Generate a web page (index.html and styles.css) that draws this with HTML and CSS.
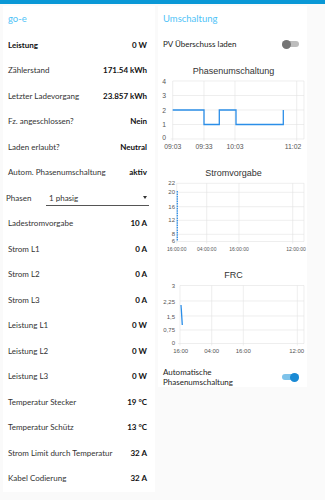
FILE: index.html
```html
<!DOCTYPE html>
<html lang="de">
<head>
  <meta charset="UTF-8">
  <title>go-e</title>
  <meta name="viewport" content="width=device-width, initial-scale=1.0">
  <link rel="stylesheet" href="styles.css">
</head>
<body>

  <div class="topbar"></div>

  <div class="main">
    <div class="card left">
      <div class="card-title">go-e</div>

      <div class="row strong"><span>Leistung</span><b>0 W</b></div>
      <div class="row"><span>Zählerstand</span><b>171.54 kWh</b></div>
      <div class="row"><span>Letzter Ladevorgang</span><b>23.857 kWh</b></div>
      <div class="row"><span>Fz. angeschlossen?</span><b>Nein</b></div>
      <div class="row"><span>Laden erlaubt?</span><b>Neutral</b></div>
      <div class="row"><span>Autom. Phasenumschaltung</span><b>aktiv</b></div>
      <div class="row select-row">
        <span class="select-label">Phasen</span>
        <div class="select">
          <span>1 phasig</span>
          <span class="caret"></span>
        </div>
      </div>
      <div class="row"><span>Ladestromvorgabe</span><b>10 A</b></div>
      <div class="row"><span>Strom L1</span><b>0 A</b></div>
      <div class="row"><span>Strom L2</span><b>0 A</b></div>
      <div class="row"><span>Strom L3</span><b>0 A</b></div>
      <div class="row"><span>Leistung L1</span><b>0 W</b></div>
      <div class="row"><span>Leistung L2</span><b>0 W</b></div>
      <div class="row"><span>Leistung L3</span><b>0 W</b></div>
      <div class="row"><span>Temperatur Stecker</span><b>19 °C</b></div>
      <div class="row"><span>Temperatur Schütz</span><b>13 °C</b></div>
      <div class="row"><span>Strom Limit durch Temperatur</span><b>32 A</b></div>
      <div class="row"><span>Kabel Codierung</span><b>32 A</b></div>
    </div>

    <div class="card right">
      <div class="card-title">Umschaltung</div>

      <div class="switch-row">
        <span>PV Überschuss laden</span>
        <div class="switch"><div class="track"></div><div class="thumb"></div></div>
      </div>

      <div class="chart first">
        <div class="chart-title">Phasenumschaltung</div>
        <svg class="plot big" viewBox="158 79 149 86" width="149" height="86">
          <g class="grid">
            <line x1="172.7" y1="81" x2="304" y2="81"/>
            <line x1="172.7" y1="95.5" x2="304" y2="95.5"/>
            <line x1="172.7" y1="110" x2="304" y2="110"/>
            <line x1="172.7" y1="124.5" x2="304" y2="124.5"/>
            <line x1="170.7" y1="139" x2="304" y2="139"/>
            <line x1="172.7" y1="81" x2="172.7" y2="141"/>
            <line x1="204" y1="81" x2="204" y2="141"/>
            <line x1="235" y1="81" x2="235" y2="141"/>
            <line x1="296.7" y1="81" x2="296.7" y2="141"/>
            <line x1="304" y1="81" x2="304" y2="139"/>
          </g>
          <g class="ylab">
            <text x="166" y="83.5">4</text>
            <text x="166" y="98">3</text>
            <text x="166" y="112.5">2</text>
            <text x="166" y="127">1</text>
            <text x="166" y="139.7">0</text>
          </g>
          <g class="xlab">
            <text x="172.7" y="148.6">09:03</text>
            <text x="204" y="148.6">09:33</text>
            <text x="235" y="148.6">10:03</text>
            <text x="293" y="148.6">11:02</text>
          </g>
          <path class="series" d="M172.7 110 H204 V124.5 H219.3 V110 H236 V124.5 H283.3 V110"/>
        </svg>
      </div>

      <div class="chart">
        <div class="chart-title">Stromvorgabe</div>
        <svg class="plot small" viewBox="158 181 149 86" width="149" height="86">
          <g class="grid">
            <line x1="176.7" y1="183.3" x2="304" y2="183.3"/>
            <line x1="176.7" y1="192.3" x2="304" y2="192.3"/>
            <line x1="176.7" y1="206.7" x2="304" y2="206.7"/>
            <line x1="176.7" y1="220.3" x2="304" y2="220.3"/>
            <line x1="176.7" y1="234.3" x2="304" y2="234.3"/>
            <line x1="176.7" y1="241.5" x2="304" y2="241.5"/>
            <line x1="176.7" y1="183.3" x2="176.7" y2="243.5"/>
            <line x1="206.7" y1="183.3" x2="206.7" y2="243.5"/>
            <line x1="239" y1="183.3" x2="239" y2="243.5"/>
            <line x1="292.7" y1="183.3" x2="292.7" y2="243.5"/>
            <line x1="304" y1="183.3" x2="304" y2="241.5"/>
          </g>
          <g class="ylab">
            <text x="175" y="184.7">22</text>
            <text x="175" y="193.7">20</text>
            <text x="175" y="208.7">16</text>
            <text x="175" y="222.2">12</text>
            <text x="175" y="236.3">8</text>
            <text x="175" y="242.8">6</text>
          </g>
          <g class="xlab">
            <text x="176.7" y="251.3">16:00:00</text>
            <text x="206.7" y="251.3">04:00:00</text>
            <text x="239" y="251.3">16:00:00</text>
            <text x="296" y="251.3">12:00:00</text>
          </g>
          <line class="series dashed" x1="177.3" y1="191" x2="177.3" y2="240.5"/>
        </svg>
      </div>

      <div class="chart">
        <div class="chart-title">FRC</div>
        <svg class="plot" viewBox="158 283 149 84" width="149" height="84">
          <g class="grid">
            <line x1="180" y1="285.5" x2="304" y2="285.5"/>
            <line x1="180" y1="301" x2="304" y2="301"/>
            <line x1="180" y1="316" x2="304" y2="316"/>
            <line x1="180" y1="330" x2="304" y2="330"/>
            <line x1="178" y1="343.5" x2="304" y2="343.5"/>
            <line x1="180" y1="285.5" x2="180" y2="345.5"/>
            <line x1="211.7" y1="285.5" x2="211.7" y2="345.5"/>
            <line x1="243.3" y1="285.5" x2="243.3" y2="345.5"/>
            <line x1="297.3" y1="285.5" x2="297.3" y2="345.5"/>
            <line x1="304" y1="285.5" x2="304" y2="343.5"/>
          </g>
          <g class="ylab">
            <text x="175" y="288">3</text>
            <text x="175" y="303.5">2,25</text>
            <text x="175" y="318.5">1,5</text>
            <text x="175" y="332">0,75</text>
            <text x="175" y="344.5">0</text>
          </g>
          <g class="xlab">
            <text x="180.7" y="353">16:00</text>
            <text x="211.7" y="353">04:00</text>
            <text x="243.3" y="353">16:00</text>
            <text x="296.7" y="353">12:00</text>
          </g>
          <line class="series" x1="181" y1="305" x2="182.3" y2="325"/>
        </svg>
      </div>

      <div class="switch-row double">
        <span>Automatische<br>Phasenumschaltung</span>
        <div class="switch on"><div class="track"></div><div class="thumb"></div></div>
      </div>
    </div>
  </div>

</body>
</html>
```

FILE: styles.css
```css
* {
  margin: 0;
  padding: 0;
  box-sizing: border-box;
}

html, body {
  width: 100%;
  height: 100%;
  background-color: #fafafa;
  font-family: Lato, "Open Sans", sans-serif;
  color: #222;
}

.topbar {
  height: 4px;
  background-color: #0a98d6;
}

.main {
  display: flex;
  align-items: flex-start;
  gap: 3px;
  padding: 2px 0 0 3px;
}

.card {
  background-color: #ffffff;
}

.left {
  width: 152px;
  padding: 0 8px 1px 5px;
}

.right {
  width: 149px;
}

.card-title {
  height: 26px;
  line-height: 26px;
  font-size: 9.5px;
  color: #4fc3f7;
}

.right .card-title {
  padding-left: 5px;
}

.row {
  height: 25.5px;
  display: flex;
  align-items: center;
  justify-content: space-between;
  font-size: 8px;
  color: #333;
}

.row b {
  font-weight: bold;
  color: #111;
}

.row.strong span {
  font-weight: bold;
  color: #111;
}

.select-row {
  justify-content: flex-start;
  margin-left: -2px;
  margin-right: -2px;
}

.select-label {
  width: 40px;
}

.select {
  flex: 1;
  display: flex;
  align-items: center;
  justify-content: space-between;
  height: 15px;
  padding: 0 2px 0 3px;
  border-bottom: 1px solid #555;
  margin-top: 1px;
}

.caret {
  width: 0;
  height: 0;
  border-left: 2.5px solid transparent;
  border-right: 2.5px solid transparent;
  border-top: 3px solid #333;
}

.switch-row {
  height: 24px;
  display: flex;
  align-items: center;
  justify-content: space-between;
  padding: 0 8px 0 5px;
  font-size: 8px;
  color: #222;
}

.switch-row.double {
  height: 20px;
  line-height: 10px;
}

.switch {
  position: relative;
  width: 17px;
  height: 9px;
}

.switch .track {
  position: absolute;
  left: 0;
  top: 1.5px;
  width: 17px;
  height: 6px;
  border-radius: 3px;
  background-color: #bdbdbd;
}

.switch .thumb {
  position: absolute;
  left: 0;
  top: 0;
  width: 9px;
  height: 9px;
  border-radius: 50%;
  background-color: #757575;
}

.switch.on .track {
  background-color: #7fc3ea;
}

.switch.on .thumb {
  left: 8px;
  background-color: #1a8ad4;
}

.chart.first {
  margin-top: 7px;
}

.chart-title {
  height: 16px;
  line-height: 16px;
  text-align: center;
  font-family: "Liberation Sans", Arial, sans-serif;
  font-size: 9px;
  color: #333;
  padding-left: 2px;
}

.plot {
  display: block;
}

.grid line {
  stroke: #e3e3e3;
  stroke-width: 0.6;
}

.ylab text,
.xlab text {
  font-family: "Liberation Sans", Arial, sans-serif;
  font-size: 6px;
  fill: #555;
}

.big .ylab text,
.big .xlab text {
  font-size: 6.8px;
}

.small .xlab text {
  font-size: 5px;
}

.ylab text {
  text-anchor: end;
}

.xlab text {
  text-anchor: middle;
}

.series {
  fill: none;
  stroke: #2b8ee8;
  stroke-width: 1.3;
}

.series.dashed {
  stroke-dasharray: 1.6 0.8;
}
```
